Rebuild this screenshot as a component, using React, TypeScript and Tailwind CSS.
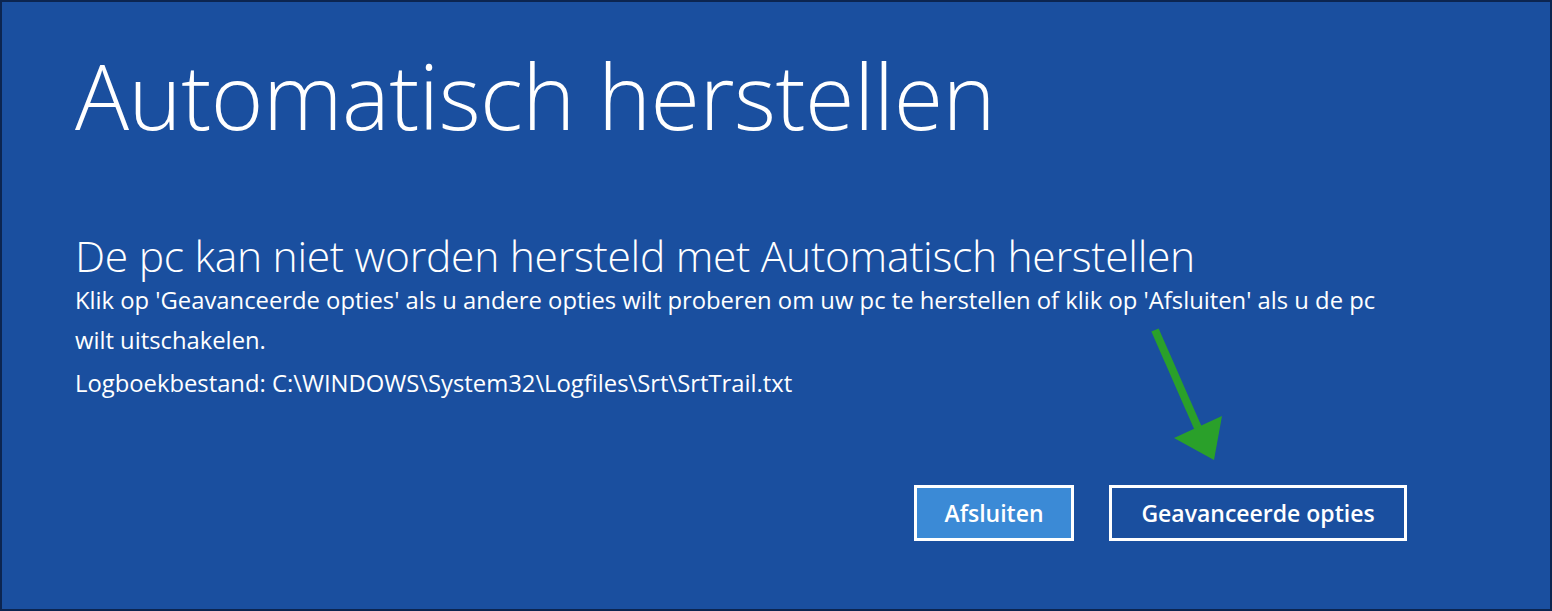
export default function App() {
  return (
    <div
      className="relative w-[1552px] h-[611px] bg-[#1a4f9f] border-2 border-[#0c2550] text-white overflow-hidden"
      style={{ fontFamily: '"Open Sans", "Noto Sans", sans-serif' }}
    >
      <div className="pl-[73px] pt-[38px]">
        <h1 className="text-[90px] font-light leading-[110px] tracking-[-0.5px]">
          Automatisch herstellen
        </h1>
        <h2 className="mt-[80px] text-[42.6px] font-light leading-[50px] tracking-[-0.3px]">
          De pc kan niet worden hersteld met Automatisch herstellen
        </h2>
        <p className="text-[23.8px] leading-[40px]">
          Klik op 'Geavanceerde opties' als u andere opties wilt proberen om uw pc te herstellen of klik op 'Afsluiten' als u de pc
          <br />
          wilt uitschakelen.
        </p>
        <p className="mt-[3px] text-[23.8px] leading-[40px]">
          Logboekbestand: C:\WINDOWS\System32\Logfiles\Srt\SrtTrail.txt
        </p>
      </div>

      <div className="flex gap-[35px] pl-[912px] mt-[82px]">
        <button className="w-[160px] h-[56px] border-[3px] border-white bg-[#3b8ad6] text-[23px] font-semibold">
          Afsluiten
        </button>
        <button className="w-[298px] h-[56px] border-[3px] border-white bg-[#1a4f9f] text-[23px] font-semibold">
          Geavanceerde opties
        </button>
      </div>

      <svg className="absolute left-0 top-0" width="1552" height="611">
        <line x1="1153" y1="328" x2="1196" y2="426" stroke="#2aa02a" strokeWidth="8" />
        <polygon points="1212,458 1172,436 1220,414" fill="#2aa02a" />
      </svg>
    </div>
  );
}
